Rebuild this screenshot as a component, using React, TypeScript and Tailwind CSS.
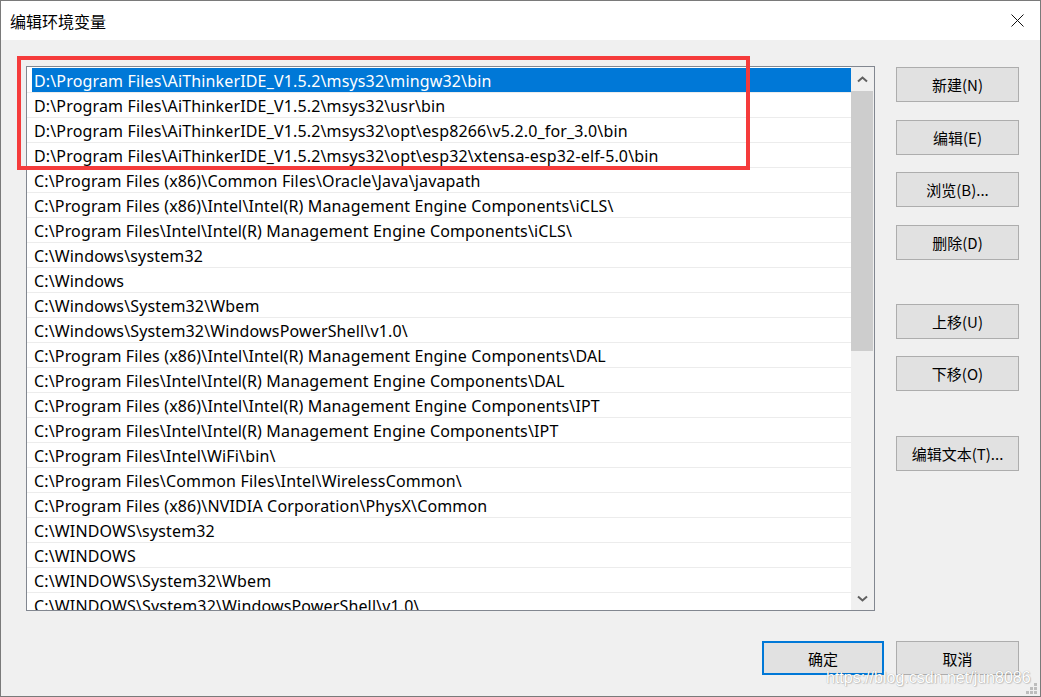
import React from "react";

const paths: string[] = [
  "D:\\Program Files\\AiThinkerIDE_V1.5.2\\msys32\\mingw32\\bin",
  "D:\\Program Files\\AiThinkerIDE_V1.5.2\\msys32\\usr\\bin",
  "D:\\Program Files\\AiThinkerIDE_V1.5.2\\msys32\\opt\\esp8266\\v5.2.0_for_3.0\\bin",
  "D:\\Program Files\\AiThinkerIDE_V1.5.2\\msys32\\opt\\esp32\\xtensa-esp32-elf-5.0\\bin",
  "C:\\Program Files (x86)\\Common Files\\Oracle\\Java\\javapath",
  "C:\\Program Files (x86)\\Intel\\Intel(R) Management Engine Components\\iCLS\\",
  "C:\\Program Files\\Intel\\Intel(R) Management Engine Components\\iCLS\\",
  "C:\\Windows\\system32",
  "C:\\Windows",
  "C:\\Windows\\System32\\Wbem",
  "C:\\Windows\\System32\\WindowsPowerShell\\v1.0\\",
  "C:\\Program Files (x86)\\Intel\\Intel(R) Management Engine Components\\DAL",
  "C:\\Program Files\\Intel\\Intel(R) Management Engine Components\\DAL",
  "C:\\Program Files (x86)\\Intel\\Intel(R) Management Engine Components\\IPT",
  "C:\\Program Files\\Intel\\Intel(R) Management Engine Components\\IPT",
  "C:\\Program Files\\Intel\\WiFi\\bin\\",
  "C:\\Program Files\\Common Files\\Intel\\WirelessCommon\\",
  "C:\\Program Files (x86)\\NVIDIA Corporation\\PhysX\\Common",
  "C:\\WINDOWS\\system32",
  "C:\\WINDOWS",
  "C:\\WINDOWS\\System32\\Wbem",
  "C:\\WINDOWS\\System32\\WindowsPowerShell\\v1.0\\",
];

interface BtnProps {
  label: string;
  className?: string;
}

// 普通按钮（Win10 风格）
const Btn: React.FC<BtnProps> = ({ label, className }) => {
  return (
    <button
      className={
        "w-[123px] h-[35px] shrink-0 bg-[#e1e1e1] border border-[#adadad] text-[15px] text-black leading-none flex items-center justify-center " +
        (className ?? "")
      }
    >
      {label}
    </button>
  );
};

const Chevron: React.FC<{ down?: boolean }> = ({ down }) => (
  <svg width="11" height="7" viewBox="0 0 11 7" className="block">
    <path
      d={down ? "M1 1.5 L5.5 5.5 L10 1.5" : "M1 5.5 L5.5 1.5 L10 5.5"}
      fill="none"
      stroke="#606060"
      strokeWidth="2"
    />
  </svg>
);

export default function App() {
  return (
    <div className="relative w-[1041px] h-[697px] overflow-hidden border border-[#7a7a7a] bg-[#f0f0f0] flex flex-col font-['Noto_Sans','Noto_Sans_CJK_SC',sans-serif] text-black">
      {/* 标题栏 */}
      <div className="h-[39px] shrink-0 bg-white flex items-center justify-between pl-[9px] pr-[16px]">
        <span className="text-[16px] font-['Noto_Sans_CJK_SC',sans-serif] leading-none">编辑环境变量</span>
        <svg width="13" height="13" viewBox="0 0 13 13">
          <path d="M0.5 0.5 L12.5 12.5 M12.5 0.5 L0.5 12.5" stroke="#111" strokeWidth="1" fill="none" />
        </svg>
      </div>

      {/* 主体 */}
      <div className="flex pl-[25px] pt-[26px]">
        {/* 列表 */}
        <div className="w-[849px] h-[545px] border border-[#828790] bg-white flex">
          <div className="flex-1 overflow-hidden pt-[1px]">
            {paths.map((p, i) => (
              <div key={i} className="h-[25px] border-b border-[#ececec] flex">
                <div
                  className={
                    "ml-[5px] flex-1 h-[24px] flex items-center pl-[2px] pt-[2px] text-[16px] tracking-[0.15px] whitespace-nowrap " +
                    (i === 0 ? "bg-[#0078d7] text-white" : "")
                  }
                >
                  {p}
                </div>
              </div>
            ))}
          </div>
          {/* 滚动条 */}
          <div className="w-[23px] bg-[#f0f0f0] flex flex-col">
            <div className="h-[24px] flex items-center justify-center">
              <Chevron />
            </div>
            <div className="mr-[1px] h-[260px] bg-[#cdcdcd]" />
            <div className="flex-1" />
            <div className="h-[24px] flex items-center justify-center">
              <Chevron down />
            </div>
          </div>
        </div>

        {/* 右侧按钮 */}
        <div className="ml-[21px] flex flex-col font-['Noto_Sans_CJK_SC',sans-serif]">
          <Btn label="新建(N)" className="mt-[1px]" />
          <Btn label="编辑(E)" className="mt-[18px]" />
          <Btn label="浏览(B)..." className="mt-[17px]" />
          <Btn label="删除(D)" className="mt-[18px]" />
          <Btn label="上移(U)" className="mt-[44px]" />
          <Btn label="下移(O)" className="mt-[17px]" />
          <Btn label="编辑文本(T)..." className="mt-[45px]" />
        </div>
      </div>

      {/* 底部按钮 */}
      <div className="flex justify-end gap-[12px] pr-[21px] mt-[30px] font-['Noto_Sans_CJK_SC',sans-serif]">
        <button className="w-[122px] h-[34px] bg-[#e1e1e1] border-2 border-[#0078d7] text-[15px] leading-none flex items-center justify-center">
          确定
        </button>
        <button className="w-[123px] h-[34px] bg-[#e1e1e1] border border-[#adadad] text-[15px] leading-none flex items-center justify-center">
          取消
        </button>
      </div>

      {/* 红框标注 */}
      <div className="absolute left-[16px] top-[55px] w-[733px] h-[114px] border-4 border-[#f53b3b] pointer-events-none" />

      {/* 水印 */}
      <div className="absolute left-[825px] top-[668px] text-[16px] leading-[18px] font-['Liberation_Sans',sans-serif] text-white [text-shadow:0_0_1px_rgba(0,0,0,0.35),1px_1px_1px_rgba(0,0,0,0.15)] pointer-events-none">
        https://blog.csdn.net/jun8086
      </div>

      {/* 尺寸调整手柄 */}
      <svg className="absolute right-[3px] bottom-[2px]" width="11" height="11" viewBox="0 0 11 11">
        <rect x="8" y="0" width="3" height="3" fill="#bdbdbd" />
        <rect x="4" y="4" width="3" height="3" fill="#bdbdbd" />
        <rect x="8" y="4" width="3" height="3" fill="#bdbdbd" />
        <rect x="0" y="8" width="3" height="3" fill="#bdbdbd" />
        <rect x="4" y="8" width="3" height="3" fill="#bdbdbd" />
        <rect x="8" y="8" width="3" height="3" fill="#bdbdbd" />
      </svg>
    </div>
  );
}
